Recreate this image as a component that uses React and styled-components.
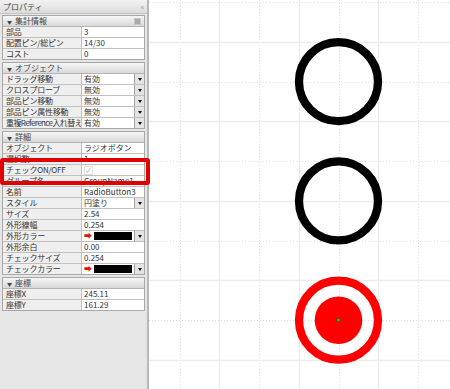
import styled, { createGlobalStyle } from 'styled-components'

const GlobalStyle = createGlobalStyle`
  html, body {
    margin: 0;
    padding: 0;
    background: #fff;
  }
  body {
    font-family: "Noto Sans CJK JP", "Noto Sans", sans-serif;
    font-size: 9px;
    color: #222;
  }
`

const Page = styled.div`
  display: flex;
  width: 450px;
  height: 389px;
  overflow: hidden;
`

const Panel = styled.div`
  position: relative;
  width: 147px;
  flex: none;
  background: #e6e6e6;
  border-right: 2px solid #b8b8b8;
  display: flex;
  flex-direction: column;
`

const TitleBar = styled.div`
  height: 13px;
  display: flex;
  align-items: center;
  justify-content: space-between;
  padding: 0 4px 0 3px;
  background: linear-gradient(#f2f2f2, #dcdcdc);
  border-bottom: 1px solid #c4c4c4;
  font-size: 8px;
  color: #444;
  line-height: 1;
`

const Collapse = styled.span`
  font-size: 7px;
  color: #888;
  letter-spacing: -1px;
`

const Sections = styled.div`
  display: flex;
  flex-direction: column;
  gap: 2px;
  padding: 1px 2px 0 2px;
`

const Box = styled.div`
  border: 1px solid #a8a8a8;
  background: #f4f4f4;
`

const Header = styled.div`
  height: 10px;
  display: flex;
  align-items: center;
  padding: 0 3px 0 4px;
  background: linear-gradient(#f6f6f6, #d9d9d9);
  border-bottom: 1px solid #b4b4b4;
  font-size: 8px;
  line-height: 1;
  color: #444;
`

const Caret = styled.span`
  font-size: 5px;
  margin-right: 3px;
  color: #444;
`

const Pin = styled.span`
  margin-left: auto;
  width: 5px;
  height: 5px;
  background: #a9a9a9;
  border: 1px solid #c8c8c8;
`

const Row = styled.div`
  display: grid;
  grid-template-columns: 79px 1fr;
  height: 11px;
  border-bottom: 1px solid #c0c0c0;
  box-sizing: border-box;
  &:last-child {
    border-bottom: none;
    height: 10px;
  }
`

const Label = styled.div`
  padding-left: 3px;
  background: #efefef;
  border-right: 1px solid #c0c0c0;
  font-size: 8px;
  line-height: 10px;
  white-space: nowrap;
  overflow: hidden;
  color: #333;
  letter-spacing: ${(p) => (p.$tight ? '-0.6px' : '-0.2px')};
`

const Value = styled.div`
  display: flex;
  align-items: center;
  background: #fff;
  padding-left: 2px;
  line-height: 10px;
  color: #222;
  white-space: nowrap;
  overflow: hidden;
`

const ValueText = styled.span`
  flex: 1;
  font-family: "Noto Sans CJK JP", sans-serif;
  font-size: 8px;
  color: #333;
`

const DropButton = styled.span`
  width: 9px;
  height: 10px;
  margin-left: auto;
  flex: none;
  background: #e4e4e4;
  border-left: 1px solid #a0a0a0;
  display: flex;
  align-items: center;
  justify-content: center;
  &::after {
    content: '';
    border-left: 2.5px solid transparent;
    border-right: 2.5px solid transparent;
    border-top: 3px solid #111;
  }
`

const Arrow = styled.span`
  color: #e8120c;
  font-size: 8px;
  margin-right: 2px;
  line-height: 1;
`

const Swatch = styled.span`
  width: 40px;
  height: 8px;
  background: #000;
  margin-right: 2px;
`

const Check = styled.span`
  width: 7px;
  height: 7px;
  border: 1px solid #e0e0e0;
  color: #aaa;
  font-size: 7px;
  line-height: 7px;
  text-align: center;
`

const Highlight = styled.div`
  position: absolute;
  left: 0;
  top: 158px;
  width: 150px;
  height: 27px;
  box-sizing: border-box;
  border: 4px solid #e10000;
  border-radius: 3px;
  pointer-events: none;
`

const Canvas = styled.div`
  flex: 1;
  background: #fff;
`

const Section = ({ title, pin, children }) => (
  <Box>
    <Header>
      <Caret>▼</Caret>
      {title}
      {pin && <Pin />}
    </Header>
    {children}
  </Box>
)

const Prop = ({ label, value, drop, color, check, tight }) => (
  <Row>
    <Label $tight={tight}>{label}</Label>
    <Value>
      {color && (
        <>
          <Arrow>➡</Arrow>
          <Swatch />
        </>
      )}
      {check && <Check>✓</Check>}
      {value !== undefined && <ValueText>{value}</ValueText>}
      {drop && <DropButton />}
    </Value>
  </Row>
)

const P = 39.75
const CX = 189.5
const CY = [81.7, 200.95, 320.2]

const GridCanvas = () => {
  const xs = []
  for (let k = -5; k <= 3; k++) xs.push({ x: CX + k * P, solid: k % 2 !== 0 })
  const ys = []
  for (let k = -3; k <= 8; k++) ys.push({ y: CY[0] + k * P, solid: k % 2 !== 0 })
  return (
    <svg width="301" height="389" viewBox="0 0 301 389">
      {xs.map(({ x, solid }) => (
        <line
          key={'x' + x}
          x1={Math.round(x) + 0.5}
          x2={Math.round(x) + 0.5}
          y1="0"
          y2="389"
          stroke={solid ? '#ececec' : '#dedede'}
          strokeWidth={solid ? 1.3 : 1}
          strokeDasharray={solid ? undefined : '1 2'}
        />
      ))}
      {ys.map(({ y, solid }) => (
        <line
          key={'y' + y}
          y1={Math.round(y) + 0.5}
          y2={Math.round(y) + 0.5}
          x1="0"
          x2="301"
          stroke={solid ? '#ececec' : '#dedede'}
          strokeWidth={solid ? 1.3 : 1}
          strokeDasharray={solid ? undefined : '1 2'}
        />
      ))}
      <circle cx={CX} cy={CY[0]} r="39.5" fill="none" stroke="#000" strokeWidth="8.3" />
      <circle cx={CX} cy={CY[1]} r="39.5" fill="none" stroke="#000" strokeWidth="8.3" />
      <circle cx={CX} cy={CY[2]} r="39.5" fill="none" stroke="#ff0000" strokeWidth="8.3" />
      <circle cx={CX} cy={CY[2]} r="23.8" fill="#ff0000" />
      <rect x={CX - 1.5} y={CY[2] - 1.5} width="3" height="3" fill="#00e000" stroke="#106010" strokeWidth="0.6" />
    </svg>
  )
}

export default function App() {
  return (
    <>
      <GlobalStyle />
      <Page>
        <Panel>
          <TitleBar>
            <span>プロパティ</span>
            <Collapse>‹‹</Collapse>
          </TitleBar>
          <Sections>
            <Section title="集計情報" pin>
              <Prop label="部品" value="3" />
              <Prop label="配置ピン/総ピン" value="14/30" />
              <Prop label="コスト" value="0" />
            </Section>
            <Section title="オブジェクト">
              <Prop label="ドラッグ移動" value="有効" drop />
              <Prop label="クロスプローブ" value="無効" drop />
              <Prop label="部品ピン移動" value="無効" drop />
              <Prop label="部品ピン属性移動" value="無効" drop />
              <Prop label="重複Reference入れ替え" value="有効" drop tight />
            </Section>
            <Section title="詳細">
              <Prop label="オブジェクト" value="ラジオボタン" />
              <Prop label="選択数" value="1" />
              <Prop label="チェックON/OFF" check />
              <Prop label="グループ名" value="GroupName1" />
              <Prop label="名前" value="RadioButton3" />
              <Prop label="スタイル" value="円塗り" drop />
              <Prop label="サイズ" value="2.54" />
              <Prop label="外形線幅" value="0.254" />
              <Prop label="外形カラー" color drop />
              <Prop label="外形余白" value="0.00" />
              <Prop label="チェックサイズ" value="0.254" />
              <Prop label="チェックカラー" color drop />
            </Section>
            <Section title="座標">
              <Prop label="座標X" value="245.11" />
              <Prop label="座標Y" value="161.29" />
            </Section>
          </Sections>
          <Highlight />
        </Panel>
        <Canvas>
          <GridCanvas />
        </Canvas>
      </Page>
    </>
  )
}
